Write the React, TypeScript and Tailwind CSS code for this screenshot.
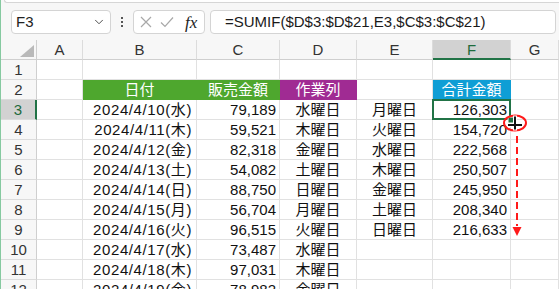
import { ChevronDown } from 'lucide-react'

type Row = {
  n: number
  date?: string
  amount?: string
  work?: string
  day?: string
  total?: string
}

const rows: Row[] = [
  { n: 3, date: '2024/4/10(水)', amount: '79,189', work: '水曜日', day: '月曜日', total: '126,303' },
  { n: 4, date: '2024/4/11(木)', amount: '59,521', work: '木曜日', day: '火曜日', total: '154,720' },
  { n: 5, date: '2024/4/12(金)', amount: '82,318', work: '金曜日', day: '水曜日', total: '222,568' },
  { n: 6, date: '2024/4/13(土)', amount: '54,082', work: '土曜日', day: '木曜日', total: '250,507' },
  { n: 7, date: '2024/4/14(日)', amount: '88,750', work: '日曜日', day: '金曜日', total: '245,950' },
  { n: 8, date: '2024/4/15(月)', amount: '56,704', work: '月曜日', day: '土曜日', total: '208,340' },
  { n: 9, date: '2024/4/16(火)', amount: '96,515', work: '火曜日', day: '日曜日', total: '216,633' },
  { n: 10, date: '2024/4/17(水)', amount: '73,487', work: '水曜日' },
  { n: 11, date: '2024/4/18(木)', amount: '97,031', work: '木曜日' },
  { n: 12, date: '2024/4/19(金)', amount: '78,982', work: '金曜日' },
]

const cols = 'grid grid-cols-[36px_46px_114px_83px_77px_76px_78px_1fr]'
const cell = 'h-[20px] border-r border-b border-[#e1e1e1] flex items-center text-[15px] leading-none text-[#111] whitespace-nowrap'
const rowHead = 'h-[20px] border-r border-b border-r-[#cfcfcf] border-b-[#dcdcdc] bg-[#f7f7f7] flex items-center justify-center text-[15px] leading-none text-[#333]'

function ColHead({ label, active }: { label: string; active?: boolean }) {
  return (
    <div
      className={
        active
          ? 'h-[20px] border-r border-[#dcdcdc] border-b-2 border-b-[#217346] bg-[#d2d2d2] flex items-center justify-center text-[15px] leading-none text-[#1e6b3c]'
          : 'h-[20px] border-r border-[#dcdcdc] border-b border-b-[#cfcfcf] bg-[#f7f7f7] flex items-center justify-center text-[15px] leading-none text-[#333]'
      }
    >
      {label}
    </div>
  )
}

export default function App() {
  return (
    <div className="relative w-[559px] h-[289px] overflow-hidden bg-white border-l border-[#86c9a0] font-['Liberation_Sans','Noto_Sans_CJK_JP',sans-serif]">
      {/* ribbon edge */}
      <div className="h-[4px] bg-[#f7f7f7]">
        <div className="h-[3px] ml-[3px] bg-white border-b border-l border-[#d6d6d6] rounded-bl-[5px]" />
      </div>

      {/* formula bar */}
      <div className="h-[36px] flex items-center bg-[#f7f7f7] pl-[10px]">
        <div className="w-[100px] h-[24px] bg-white border border-[#d4d4d4] rounded-[4px] flex items-center justify-between pl-[4px] pr-[4px] text-[15px] text-[#222]">
          <span>F3</span>
          <ChevronDown size={14} strokeWidth={1.6} className="text-[#444]" />
        </div>
        <div className="w-[22px] flex flex-col items-center gap-[2px]">
          <div className="w-[2px] h-[2px] bg-[#555]" />
          <div className="w-[2px] h-[2px] bg-[#555]" />
          <div className="w-[2px] h-[2px] bg-[#555]" />
        </div>
        <div className="w-[72px] h-[24px] bg-white border border-[#d4d4d4] rounded-[4px] flex items-center pl-[6px] gap-[8px]">
          <svg width="12" height="12" viewBox="0 0 12 12" className="shrink-0">
            <path d="M1 1 L11 11 M11 1 L1 11" stroke="#a8a8a8" strokeWidth="1.2" fill="none" />
          </svg>
          <svg width="14" height="12" viewBox="0 0 14 12" className="shrink-0">
            <path d="M1 6.5 L5 10.5 L13 1.5" stroke="#a8a8a8" strokeWidth="1.2" fill="none" />
          </svg>
          <span className="ml-[3px] font-['Liberation_Serif',serif] italic text-[17px] leading-none text-[#222]">fx</span>
        </div>
        <div className="ml-[5px] w-[346px] h-[24px] bg-white border border-[#d4d4d4] rounded-[4px] flex items-center pl-[14px] text-[15px] text-[#1a1a1a] whitespace-nowrap">
          =SUMIF($D$3:$D$21,E3,$C$3:$C$21)
        </div>
      </div>

      {/* grid */}
      <div className={cols}>
        <div className="relative h-[20px] border-r border-b border-r-[#cfcfcf] border-b-[#cfcfcf] bg-[#f7f7f7]">
          <svg width="14" height="12" viewBox="0 0 14 12" className="absolute right-[2px] bottom-[2px]">
            <polygon points="14,0 14,12 0,12" fill="#b9b9b9" />
          </svg>
        </div>
        <ColHead label="A" />
        <ColHead label="B" />
        <ColHead label="C" />
        <ColHead label="D" />
        <ColHead label="E" />
        <ColHead label="F" active />
        <ColHead label="G" />

        {/* row 1 */}
        <div className={rowHead}>1</div>
        <div className={cell} />
        <div className={cell} />
        <div className={cell} />
        <div className={cell} />
        <div className={cell} />
        <div className={cell} />
        <div className={cell} />

        {/* row 2 */}
        <div className={rowHead}>2</div>
        <div className={cell} />
        <div className="h-[20px] border-r border-b border-[#4ea72e] bg-[#4ea72e] flex items-center justify-center text-[15px] leading-none text-white">日付</div>
        <div className="h-[20px] border-r border-b border-[#4ea72e] bg-[#4ea72e] flex items-center justify-center text-[15px] leading-none text-white">販売金額</div>
        <div className="h-[20px] border-r border-b border-[#a02b93] bg-[#a02b93] flex items-center justify-center text-[15px] leading-none text-white">作業列</div>
        <div className={cell} />
        <div className="h-[20px] border-r border-b border-[#0f9ed5] bg-[#0f9ed5] flex items-center justify-center text-[15px] leading-none text-white">合計金額</div>
        <div className={cell} />

        {rows.map((r) => (
          <RowView key={r.n} r={r} />
        ))}
      </div>

      {/* fill-handle drag annotation */}
      <svg width="40" height="135" viewBox="0 0 40 135" className="absolute left-[495px] top-[108px] pointer-events-none">
        <rect x="12" y="9" width="6" height="6" fill="#217346" stroke="#fff" strokeWidth="1" />
        <ellipse cx="19" cy="15" rx="11" ry="7.5" fill="none" stroke="#ff1a1a" strokeWidth="2" />
        <path d="M19 7.5 V22.5 M11 17 H27" stroke="#fff" strokeWidth="4" />
        <path d="M19 8.5 V21.5 M12 17 H26" stroke="#111" strokeWidth="2" />
        <path d="M21 28 V118" stroke="#ff1a1a" strokeWidth="2" strokeDasharray="7 4" />
        <polygon points="16.5,119 25.5,119 21,128" fill="#ff1a1a" />
      </svg>
    </div>
  )
}

function RowView({ r }: { r: Row }) {
  const selected = r.n === 3
  return (
    <>
      <div
        className={
          selected
            ? 'h-[20px] border-r-2 border-b border-r-[#217346] border-b-[#dcdcdc] bg-[#d2d2d2] flex items-center justify-center text-[15px] leading-none text-[#1e6b3c]'
            : rowHead
        }
      >
        {r.n}
      </div>
      <div className={cell} />
      <div className={cell + ' justify-end pr-[4px] tracking-[0.6px]'}>{r.date}</div>
      <div className={cell + ' justify-end pr-[3px]'}>{r.amount}</div>
      <div className={cell + ' justify-center'}>{r.work}</div>
      <div className={cell + ' justify-center'}>{r.day}</div>
      <div className={cell + ' relative justify-end pr-[3px]'}>
        {r.total}
        {selected && <div className="absolute -left-[1px] -top-[1px] w-[79px] h-[21px] border-2 border-[#217346]" />}
      </div>
      <div className={cell} />
    </>
  )
}
